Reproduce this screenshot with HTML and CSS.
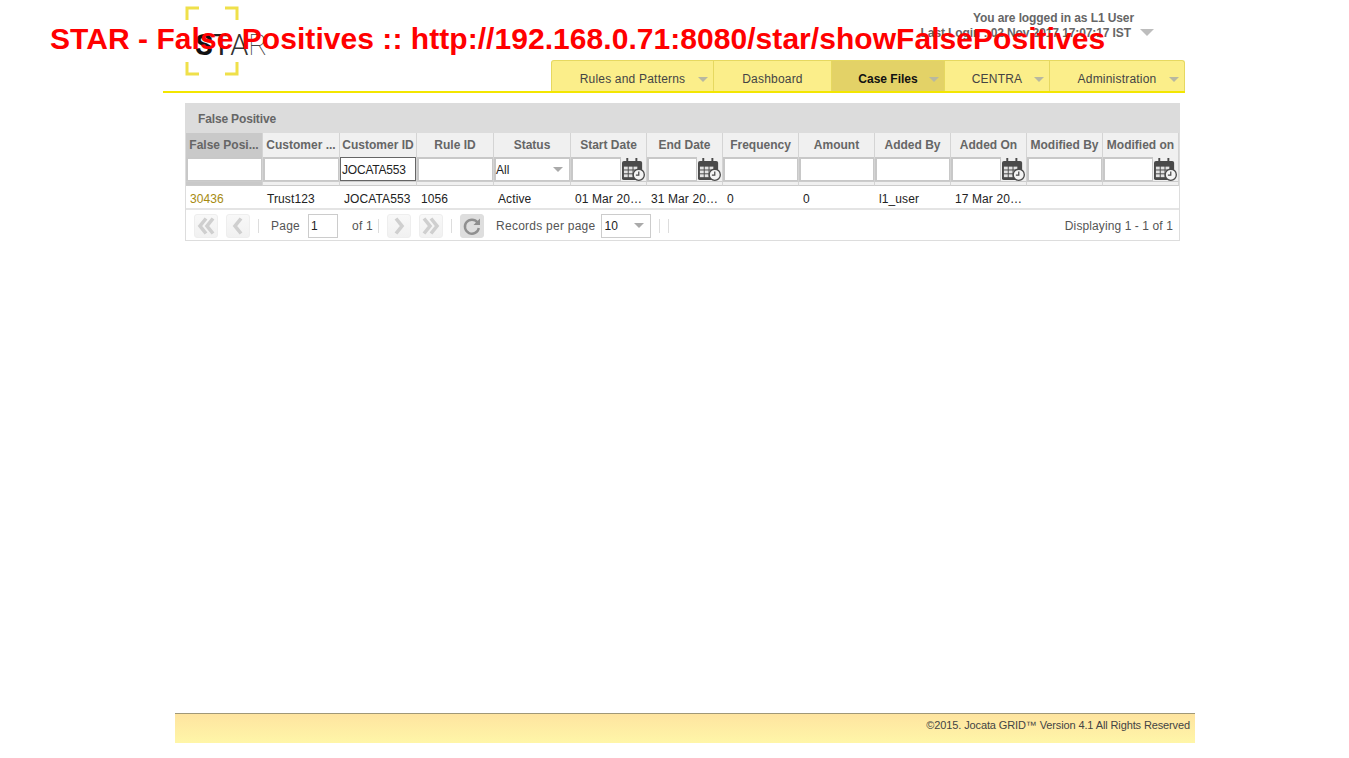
FILE: index.html
```html
<!DOCTYPE html>
<html lang="en">
<head>
<meta charset="utf-8">
<title>STAR - False Positives</title>
<link rel="stylesheet" href="styles.css">
</head>
<body>
<svg class="defs" width="0" height="0" aria-hidden="true">
  <symbol id="cal" viewBox="0 0 24 24">
    <rect x="0" y="3" width="21" height="20" rx="2" fill="#4a4a4a"/>
    <rect x="4.500" y="0" width="2" height="5" fill="#4a4a4a"/>
    <rect x="14" y="0" width="2" height="5" fill="#4a4a4a"/>
    <g fill="#e2e2e2">
      <rect x="2" y="9" width="4" height="3"/><rect x="7" y="9" width="4" height="3"/><rect x="12" y="9" width="4" height="3"/>
      <rect x="2" y="13" width="4" height="3"/><rect x="7" y="13" width="4" height="3"/><rect x="12" y="13" width="4" height="3"/>
      <rect x="2" y="17" width="4" height="3"/><rect x="7" y="17" width="4" height="3"/>
    </g>
    <circle cx="17.500" cy="17.500" r="5.800" fill="#f4f4f4" stroke="#4a4a4a" stroke-width="1.400"/>
    <path d="M17.500 14v3.800h-3" fill="none" stroke="#4a4a4a" stroke-width="1.300"/>
  </symbol>
</svg>

<h1 class="page-title">STAR - False Positives :: http://192.168.0.71:8080/star/showFalsePositives</h1>

<div class="page">
  <header class="header">
    <div class="logo">
      <svg class="logo-frame" width="54" height="70" viewBox="0 0 54 70" aria-hidden="true">
        <path d="M14 2H2V14M40 2H52V14M14 68H2V56M40 68H52V56" fill="none" stroke="#efe04a" stroke-width="3"/>
      </svg>
      <span class="logo-text"><b>S</b><i>T</i><u>A</u><s>R</s></span>
    </div>
    <div class="header-right">
      <div class="user">
        <div class="user-text">
          <div class="logged">You are logged in as L1 User</div>
          <div class="last-login">Last Login : 02 Nov 2017 17:07:17 IST</div>
        </div>
        <span class="user-arrow"></span>
      </div>
      <nav class="nav">
        <a class="nav-item w1">Rules and Patterns<span class="caret"></span></a>
        <a class="nav-item w2">Dashboard</a>
        <a class="nav-item w3 active">Case Files<span class="caret"></span></a>
        <a class="nav-item w4">CENTRA<span class="caret"></span></a>
        <a class="nav-item w5">Administration<span class="caret"></span></a>
      </nav>
    </div>
  </header>

  <main class="panel">
    <div class="panel-title">False Positive</div>
    <div class="grid">
      <div class="hd sorted">False Posi...</div>
      <div class="hd">Customer ...</div>
      <div class="hd">Customer ID</div>
      <div class="hd">Rule ID</div>
      <div class="hd">Status</div>
      <div class="hd">Start Date</div>
      <div class="hd">End Date</div>
      <div class="hd">Frequency</div>
      <div class="hd">Amount</div>
      <div class="hd">Added By</div>
      <div class="hd">Added On</div>
      <div class="hd">Modified By</div>
      <div class="hd">Modified on</div>

      <div class="flt"><span class="box"></span></div>
      <div class="flt"><span class="box"></span></div>
      <div class="flt"><span class="box focus">JOCATA553</span></div>
      <div class="flt"><span class="box"></span></div>
      <div class="flt"><span class="box sel">All<span class="caret small"></span></span></div>
      <div class="flt date"><span class="box"></span><svg class="cal"><use href="#cal"/></svg></div>
      <div class="flt date"><span class="box"></span><svg class="cal"><use href="#cal"/></svg></div>
      <div class="flt"><span class="box"></span></div>
      <div class="flt"><span class="box"></span></div>
      <div class="flt"><span class="box"></span></div>
      <div class="flt date"><span class="box"></span><svg class="cal"><use href="#cal"/></svg></div>
      <div class="flt"><span class="box"></span></div>
      <div class="flt date"><span class="box"></span><svg class="cal"><use href="#cal"/></svg></div>

      <div class="strip sorted"></div><div class="strip"></div><div class="strip"></div><div class="strip"></div><div class="strip"></div><div class="strip"></div><div class="strip"></div><div class="strip"></div><div class="strip"></div><div class="strip"></div><div class="strip"></div><div class="strip"></div><div class="strip"></div>

      <div class="td link">30436</div>
      <div class="td">Trust123</div>
      <div class="td">JOCATA553</div>
      <div class="td">1056</div>
      <div class="td">Active</div>
      <div class="td">01 Mar 20…</div>
      <div class="td">31 Mar 20…</div>
      <div class="td">0</div>
      <div class="td">0</div>
      <div class="td">l1_user</div>
      <div class="td">17 Mar 20…</div>
      <div class="td"></div>
      <div class="td"></div>
    </div>

    <div class="pager">
      <span class="btn"><svg width="22" height="22" viewBox="0 0 22 22"><path d="M11 3.500 5 11l6 7.500M18 3.500 12 11l6 7.500" fill="none" stroke="#cfcfcf" stroke-width="3.600"/></svg></span>
      <span class="btn"><svg width="22" height="22" viewBox="0 0 22 22"><path d="M14 3.500 8 11l6 7.500" fill="none" stroke="#cfcfcf" stroke-width="3.600"/></svg></span>
      <span class="sep s1"></span>
      <span class="lbl page-lbl">Page</span>
      <span class="box pg">1</span>
      <span class="lbl of">of 1</span>
      <span class="sep s2"></span>
      <span class="btn"><svg width="22" height="22" viewBox="0 0 22 22"><path d="M8 3.500 14 11l-6 7.500" fill="none" stroke="#cfcfcf" stroke-width="3.600"/></svg></span>
      <span class="btn"><svg width="22" height="22" viewBox="0 0 22 22"><path d="M4 3.500 10 11l-6 7.500M11 3.500 17 11l-6 7.500" fill="none" stroke="#cfcfcf" stroke-width="3.600"/></svg></span>
      <span class="sep s3"></span>
      <span class="btn refresh"><svg width="22" height="22" viewBox="0 0 22 22"><path d="M16.500 7.500A7 7 0 1 0 17.800 13" fill="none" stroke="#8f8f8f" stroke-width="2.400"/><path d="M19 3.500V10h-6.500z" fill="#8f8f8f"/></svg></span>
      <span class="lbl rec">Records per page</span>
      <span class="box per">10<span class="caret small"></span></span>
      <span class="sep s4"></span>
      <span class="sep s5"></span>
      <span class="lbl disp">Displaying 1 - 1 of 1</span>
    </div>
  </main>

  <footer class="footer">©2015. Jocata GRID™ Version 4.1 All Rights Reserved</footer>
</div>
</body>
</html>
```
FILE: styles.css
```css
* { box-sizing: border-box; }
html, body { margin: 0; padding: 0; background: #fff; }
body { font: 12px "Liberation Sans", Arial, sans-serif; color: #222; position: relative; height: 758px; overflow: hidden; }
.defs { position: absolute; }

.page-title {
  position: absolute; left: 50px; top: 20px; margin: 0; z-index: 5;
  font: bold 30px/38px "Liberation Sans", Arial, sans-serif; letter-spacing: 0.05px; color: #f00; white-space: nowrap;
}

.page { display: flex; flex-direction: column; height: 743px; }

.header {
  display: flex; justify-content: space-between;
  width: 1022px; height: 93px; margin-left: 163px;
  border-bottom: 2px solid #f3e600;
}
.logo { position: relative; width: 82px; margin-left: 22px; padding: 6px 0 0 0; }
.logo-frame { display: block; }
.logo-text {
  position: absolute; left: 10px; top: 30px;
  font: 29px/30px Roboto, "Liberation Sans", sans-serif; color: #222; letter-spacing: 0; white-space: nowrap;
}
.logo-text b { font-weight: 700; color: #111; }
.logo-text i { font-style: normal; font-weight: 400; color: #222; }
.logo-text u { text-decoration: none; font-weight: 300; color: #333; }
.logo-text s { text-decoration: none; font-weight: 100; color: #444; }

.header-right { display: flex; flex-direction: column; align-items: flex-end; }
.user { display: flex; height: 60px; padding: 11px 31px 0 0; color: #666; font-weight: bold; letter-spacing: -0.1px; }
.user-text { text-align: right; line-height: 15px; }
.logged { margin-right: -3px; }
.user-arrow {
  width: 0; height: 0; margin: 18px 0 0 9px;
  border: 7.500px solid transparent; border-top: 7.500px solid #bdbdbd; border-bottom: 0;
}

.nav { display: flex; height: 31px; background: #fbee8a; border: 1px solid #e6d860; border-bottom: 0; border-radius: 3px 3px 0 0; }
.nav-item {
  position: relative; display: flex; align-items: center; justify-content: center;
  height: 30px; padding-top: 5px; color: #444; letter-spacing: 0.2px; border-right: 1px solid #e6d860;
}
.nav-item:last-child { border-right: 0; }
.w1 { width: 162px; }
.w2 { width: 118px; }
.w3 { width: 113px; letter-spacing: 0; }
.w4 { width: 105px; }
.w5 { width: 134px; }
.active { background: #e3d267; color: #111; font-weight: bold; }
.caret {
  position: absolute; right: 5px; top: 16px; width: 0; height: 0;
  border: 5px solid transparent; border-top: 5px solid #b8b8a0; border-bottom: 0;
}
.caret.small { right: 6px; top: 8px; border-top-color: #aaa; }

.panel {
  width: 995px; height: 138px; margin: 10px 0 0 185px;
  border: 1px solid #ddd; border-top: 0;
}
.panel-title { height: 30px; margin: 0 -1px; padding: 9px 0 0 13px; background: #dcdcdc; color: #666; font-weight: bold; line-height: 14px; letter-spacing: -0.15px; }

.grid { display: grid; grid-template-columns: repeat(5, 77px) repeat(8, 76px); border-bottom: 2px solid #e4e4e4; }
.hd {
  height: 24px; padding-top: 5px; background: #f0f0f0; border-right: 1px solid #d4d4d4;
  color: #666; font-weight: bold; text-align: center; line-height: 14px; white-space: nowrap; overflow: hidden;
}
.hd.sorted, .strip.sorted { background: #c9c9c9; }
.flt { display: flex; height: 24px; background: #f0f0f0; border-right: 1px solid #d4d4d4; }
.box {
  position: relative; display: block; flex: 1; background: #fff;
  border: 1px solid #c8c8c8; border-top-width: 2px; border-left-width: 2px;
  padding: 4px 0 0 1px; color: #222; line-height: 14px; white-space: nowrap;
}
.focus { border: 1px solid #666; padding: 5px 0 0 1px; letter-spacing: -0.2px; }
.sel { padding-left: 0; }
.date .box { flex: 0 0 50px; }
.cal { flex: none; width: 25px; height: 23px; margin-top: 1px; }
.strip { height: 5px; background: #f0f0f0; border-right: 1px solid #d4d4d4; border-top: 1px solid #ccc; border-bottom: 1px solid #ccc; }
.td { height: 22px; padding: 6px 0 0 4px; line-height: 14px; white-space: nowrap; color: #222; letter-spacing: 0.1px; }
.link { color: #a68a10; }

.pager { display: flex; align-items: center; height: 30px; padding: 2px 6px 0 8px; color: #555; letter-spacing: 0.25px; }
.btn {
  display: flex; align-items: center; justify-content: center;
  width: 24px; height: 24px; margin-right: 8px;
  border: 1px solid #eee; border-radius: 3px; background: linear-gradient(#f8f8f8, #f1f1f1);
}
.refresh { background: #dedede; border-color: #dedede; margin-right: 12px; }
.sep { width: 1px; height: 14px; background: #ddd; }
.s1 { margin-right: 12px; }
.page-lbl { margin-right: 8px; }
.box.pg { flex: 0 0 30px; height: 24px; border: 1px solid #ccc; padding: 4px 0 0 2px; }
.of { margin: 0 5px 0 14px; }
.s2 { margin-right: 8px; }
.s3 { margin-right: 8px; }
.rec { margin-right: 6px; }
.box.per { flex: 0 0 50px; height: 24px; border: 1px solid #ccc; padding: 4px 0 0 2px; }
.s4 { margin: 0 8px; }
.disp { margin-left: auto; letter-spacing: 0.1px; }

.footer {
  width: 1020px; height: 30px; margin: auto 0 0 175px; padding: 4px 5px 0 0;
  border-top: 1px solid #a09878; background: linear-gradient(#fee4a0, #fff6a8);
  color: #444; font-size: 11px; letter-spacing: -0.12px; line-height: 14px; text-align: right;
}
```
